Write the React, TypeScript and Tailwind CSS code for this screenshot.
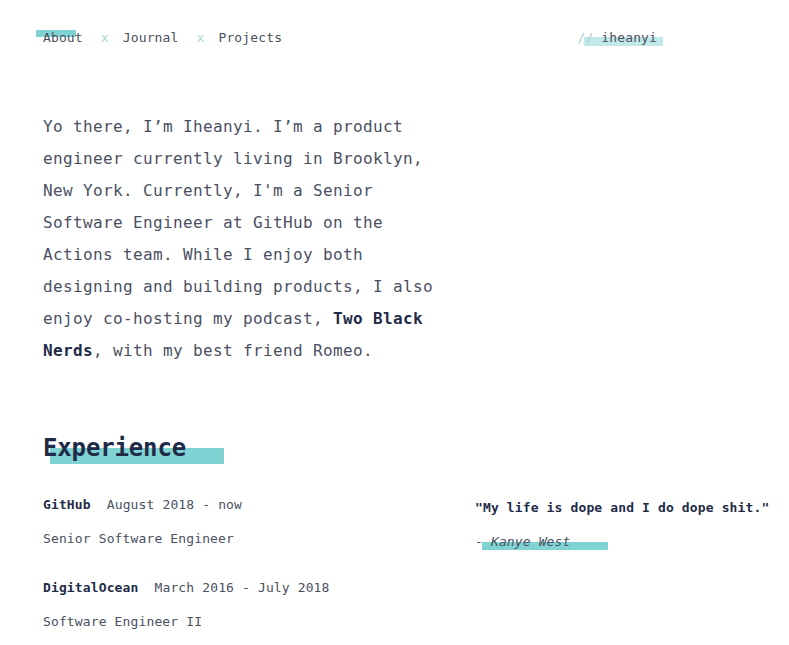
function Marker({
  children,
  mark,
}: {
  children: React.ReactNode;
  mark: string;
}) {
  return (
    <span className="relative inline-block">
      <span className={`absolute ${mark}`} />
      <span className="relative">{children}</span>
    </span>
  );
}

function Job({ company, dates, title, className }: { company: string; dates: string; title: string; className?: string }) {
  return (
    <div className={className}>
      <div className="h-5 leading-5">
        <span className="font-bold text-[#1f2b47]">{company}</span>
        <span className="ml-4">{dates}</span>
      </div>
      <div className="mt-[14px] h-5 leading-5">{title}</div>
    </div>
  );
}

export default function App() {
  return (
    <div className="min-h-[645px] bg-white pl-[43px] pt-7 font-['DejaVu_Sans_Mono',monospace] text-[#4a5061] tracking-[0.13px]">
      <nav className="flex w-[614px] items-center justify-between text-[13px] leading-5">
        <div className="flex items-center">
          <Marker mark="-left-[7px] top-[2px] h-[7px] w-[40px] bg-[#7fd3d3]">About</Marker>
          <span className="ml-[18px] text-[#a9dcd3]">x</span>
          <span className="ml-[14px]">Journal</span>
          <span className="ml-[18px] text-[#a9dcd3]">x</span>
          <span className="ml-[14px]">Projects</span>
        </div>
        <Marker mark="left-[7px] top-[9px] h-[9px] w-[79px] bg-[#c2e9e9]">
          <span className="text-[#a9cfcf]">//</span> iheanyi
        </Marker>
      </nav>

      <p className="mt-[63px] w-[400px] text-[16px] leading-8 tracking-[0.37px]">
        Yo there, I’m Iheanyi. I’m a product engineer currently living in Brooklyn, New York. Currently, I'm a
        Senior Software Engineer at GitHub on the Actions team. While I enjoy both designing and building
        products, I also enjoy co-hosting my podcast, <span className="font-bold text-[#1f2b47]">Two Black Nerds</span>,
        with my best friend Romeo.
      </p>

      <h2 className="mt-[65px] text-[24px] font-bold leading-8 tracking-[-0.15px] text-[#1f2b47]">
        <Marker mark="left-[7px] top-[16px] h-[16px] w-[174px] bg-[#7fd3d3]">Experience</Marker>
      </h2>

      <div className="mt-[31px] flex text-[13px]">
        <div className="w-[432px]">
          <Job company="GitHub" dates="August 2018 - now" title="Senior Software Engineer" />
          <Job className="mt-[29px]" company="DigitalOcean" dates="March 2016 - July 2018" title="Software Engineer II" />
        </div>
        <div className="mt-[3px]">
          <div className="h-5 font-bold leading-5 text-[#1f2b47]">"My life is dope and I do dope shit."</div>
          <div className="mt-[14px] h-5 leading-5">
            <Marker mark="left-[7px] top-[10px] h-[8px] w-[126px] bg-[#7fd3d3]">
              - <span className="italic">Kanye West</span>
            </Marker>
          </div>
        </div>
      </div>
    </div>
  );
}
